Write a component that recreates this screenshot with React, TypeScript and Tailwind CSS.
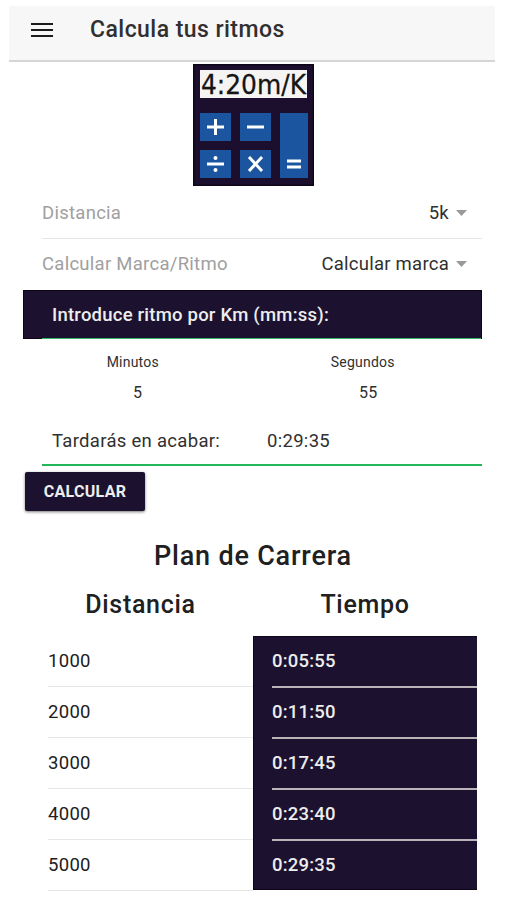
import React from 'react';

const splits = [
  { distance: '1000', time: '0:05:55' },
  { distance: '2000', time: '0:11:50' },
  { distance: '3000', time: '0:17:45' },
  { distance: '4000', time: '0:23:40' },
  { distance: '5000', time: '0:29:35' },
];

function CalculatorLogo() {
  return (
    <svg className="mt-[2px] ml-[193px] block h-[122px] w-[121px]" viewBox="0 0 121 122">
      <rect width="121" height="122" fill="#1c0f2d" />
      <rect x="0.75" y="0.75" width="119.5" height="120.5" fill="none" stroke="#0d0618" strokeWidth="1.5" />
      <rect x="7" y="6" width="107" height="28" fill="#f5f4f2" />
      <text
        x="8"
        y="30"
        textLength="105"
        lengthAdjust="spacingAndGlyphs"
        fill="#151515"
        stroke="#151515"
        strokeWidth="0.3"
        className="font-['DejaVu_Sans',sans-serif] text-[27px]"
      >
        4:20m/K
      </text>
      <g fill="#1b559f">
        <rect x="7" y="49" width="31" height="28" />
        <rect x="47" y="49" width="31" height="28" />
        <rect x="7" y="86" width="31" height="28" />
        <rect x="47" y="86" width="31" height="28" />
        <rect x="87" y="49" width="28" height="65" />
      </g>
      <g stroke="#fff" strokeWidth="3" fill="none">
        <path d="M14 63h17M22.500 55v16" />
        <path d="M54 63h17" />
        <path d="M14 100h17" />
        <path d="M56 93l13 14M69 93l-13 14" />
        <path d="M94 97h14M94 103h14" />
      </g>
      <circle cx="22.500" cy="94" r="2" fill="#fff" />
      <circle cx="22.500" cy="106" r="2" fill="#fff" />
    </svg>
  );
}

function SelectRow({ label, value }: { label: string; value: string }) {
  return (
    <div className="ml-[42px] flex h-[50px] w-[440px] items-center justify-between pt-[2px] pr-[15px] text-[18.5px]">
      <span className="tracking-[0.27px] text-[#a0a0a0]">{label}</span>
      <span className="flex items-center gap-[7px] tracking-[0.25px] text-[#303030]">
        {value}
        <svg className="mb-[2px] h-[6px] w-[11px]" viewBox="0 0 11 6">
          <path d="M0 0h11L5.500 6z" fill="#999" />
        </svg>
      </span>
    </div>
  );
}

export default function App() {
  return (
    <main className="h-[900px] w-[506px] overflow-hidden bg-white pt-[6px] font-[Roboto,sans-serif] text-[#202020]">
      <header className="ml-[9px] flex h-[56px] w-[486px] items-center border-b-2 border-[#d6d6d6] bg-[#f7f7f7] pb-[7px] pl-[22px]">
        <svg className="h-[14px] w-[22px]" viewBox="0 0 22 14" stroke="#1c1c1c" strokeWidth="2">
          <path d="M0 1h22M0 7h22M0 13h22" />
        </svg>
        <h1 className="ml-[37px] pt-[2px] text-[23px] font-medium tracking-[0.45px] text-[#303030]">Calcula tus ritmos</h1>
      </header>

      <CalculatorLogo />

      <div className="pt-[2px]">
        <SelectRow label="Distancia" value="5k" />
        <div className="ml-[42px] h-px w-[440px] bg-[#e6e6e6]" />
        <SelectRow label="Calcular Marca/Ritmo" value="Calcular marca" />
      </div>

      <section className="pt-px">
        <div className="ml-[23px] h-[49px] w-[459px] border border-[#0c0516] bg-[#1c1230]">
          <div className="ml-[18px] h-[48px] border-b border-[#35b866] pl-[10px] text-[18.5px] leading-[48px] font-medium tracking-[0.22px] text-[#ededed]">
            Introduce ritmo por Km (mm:ss):
          </div>
        </div>
        <div className="ml-[23px] grid h-[76px] w-[459px] grid-cols-2 text-center text-[#303030]">
          <div className="pt-[13px]">
            <div className="mr-[10px] text-[14px] leading-[20px] tracking-[0.2px]">Minutos</div>
            <div className="mt-[11px] text-[16px] leading-[20px] tracking-[0.3px]">5</div>
          </div>
          <div className="pt-[13px]">
            <div className="mr-[9px] text-[14px] leading-[20px] tracking-[0.2px]">Segundos</div>
            <div className="mt-[11px] ml-[2px] text-[16px] leading-[20px] tracking-[0.3px]">55</div>
          </div>
        </div>
        <div className="ml-[42px] flex h-[51px] w-[440px] items-center border-b-2 border-[#22b85a] pt-[4px] pl-[10px] text-[18.5px] text-[#303030]">
          <span className="w-[215px] tracking-[0.3px]">Tardarás en acabar:</span>
          <span className="tracking-[0.3px]">0:29:35</span>
        </div>
      </section>

      <button className="mt-[6px] ml-[25px] block h-[39px] w-[120px] rounded-[2px] bg-[#1c1230] text-[16px] font-bold tracking-[0.3px] text-[#ededed] shadow-[0_1px_3px_#777]">
        CALCULAR
      </button>

      <h2 className="mt-[29px] ml-[154px] text-[27px] leading-[32px] font-medium tracking-[0.8px]">Plan de Carrera</h2>
      <div className="mt-[17px] ml-[28px] flex h-[32px] w-[449px] text-center text-[25px] leading-[32px] font-medium tracking-[0.7px]">
        <h3 className="w-[225px]">Distancia</h3>
        <h3 className="w-[224px]">Tiempo</h3>
      </div>

      <div className="mt-[15px] ml-[48px] flex w-[429px]">
        <div className="w-[205px]">
          {splits.map((split) => (
            <div key={split.distance} className="h-[51px] border-b border-[#e6e6e6] text-[18.5px] leading-[50px] tracking-[0.3px]">
              {split.distance}
            </div>
          ))}
        </div>
        <div className="h-[254px] w-[224px] overflow-hidden border border-r-0 border-[#0c0516] bg-[#1c1230] pl-[18px]">
          {splits.map((split) => (
            <div key={split.time} className="h-[51px] border-b-2 border-[#b9b4b8] text-[18.5px] leading-[49px] font-medium tracking-[0.2px] text-[#ededed]">
              {split.time}
            </div>
          ))}
        </div>
      </div>
    </main>
  );
}
